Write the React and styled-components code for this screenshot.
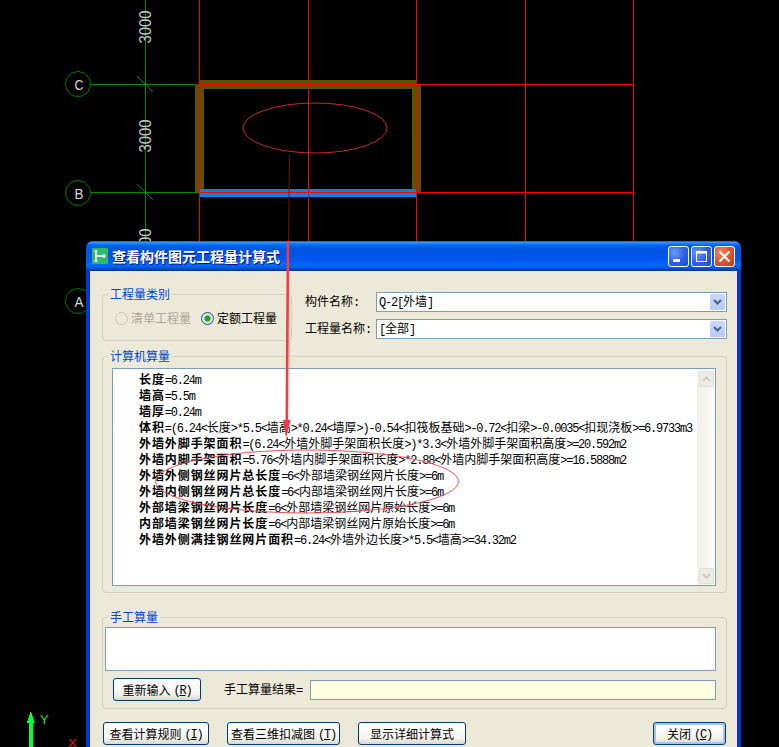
import styled, { createGlobalStyle } from "styled-components";

const GlobalStyle = createGlobalStyle`
  html, body {
    margin: 0;
    background: #000;
  }
  body {
    font-family: "Noto Sans CJK SC", "Liberation Sans", sans-serif;
    font-size: 12px;
    color: #000;
  }
`;

const Screen = styled.div`
  position: relative;
  width: 779px;
  height: 747px;
  overflow: hidden;
  background: #000;
`;

const Overlay = styled.svg`
  position: absolute;
  left: 0;
  top: 0;
  pointer-events: none;
`;

const Dialog = styled.div`
  position: absolute;
  left: 86px;
  top: 241px;
  width: 655px;
  display: flex;
  flex-direction: column;
  background: #0a34d6;
  border-radius: 7px 7px 0 0;
`;

const TitleBar = styled.div`
  height: 30px;
  display: flex;
  align-items: center;
  padding: 0 6px 0 6px;
  border-radius: 7px 7px 0 0;
  background: linear-gradient(
    180deg,
    #0058ee 0%,
    #3593ff 5%,
    #127dff 9%,
    #0262ee 15%,
    #0054e3 28%,
    #0055eb 56%,
    #005bf5 68%,
    #026afe 78%,
    #0062ef 86%,
    #0052d6 92%,
    #0040ab 96%,
    #003092 100%
  );
`;

const TitleText = styled.div`
  margin-left: 4px;
  flex: 1;
  color: #fff;
  font-size: 14px;
  line-height: 18px;
  font-weight: 700;
  white-space: nowrap;
  text-shadow: 1px 1px 0 #0f1089;
`;

const WinButton = styled.div`
  width: 21px;
  height: 21px;
  box-sizing: border-box;
  margin-left: 2px;
  display: flex;
  align-items: center;
  justify-content: center;
  border: 1px solid #fff;
  border-radius: 3px;
  background: ${(p) =>
    p.$close
      ? "radial-gradient(circle at 30% 30%, #ee8a68 0%, #dd5a34 45%, #c13a14 100%)"
      : "radial-gradient(circle at 30% 30%, #6d9bf5 0%, #2f62e6 50%, #1c49d3 100%)"};
`;

const Body = styled.div`
  margin: 0 4px;
  padding: 21px 10px 2px 12px;
  background: #ece9d8;
  display: flex;
  flex-direction: column;
`;

const TopRow = styled.div`
  display: flex;
  align-items: flex-start;
  gap: 13px;
`;

const Group = styled.div`
  position: relative;
  box-sizing: border-box;
  width: ${(p) => p.$w || 625}px;
  height: ${(p) => p.$h}px;
  margin-top: ${(p) => p.$top}px;
  border: 1px solid #d0d0bf;
  border-radius: 4px;
  display: flex;
  flex-direction: column;
`;

const Legend = styled.div`
  position: absolute;
  left: 5px;
  top: -9px;
  padding: 0 2px;
  line-height: 16px;
  color: #0046d5;
  background: #ece9d8;
  white-space: nowrap;
`;

const RadioRow = styled.div`
  display: flex;
  align-items: center;
  height: 45px;
  padding-left: 12px;
  margin-top: 1px;
`;

const RadioOption = styled.label`
  display: flex;
  align-items: center;
  gap: 3px;
  margin-right: 10px;
  line-height: 16px;
  color: ${(p) => (p.$disabled ? "#aca899" : "#000")};
`;

const RadioDot = styled.span`
  width: 13px;
  height: 13px;
  box-sizing: border-box;
  border-radius: 50%;
  border: 1px solid ${(p) => (p.$disabled ? "#cac8bb" : "#1c5180")};
  background: ${(p) =>
    p.$checked
      ? "radial-gradient(circle, #21a121 0 2.5px, #d6dce6 3.5px, #f4f4f0 100%)"
      : "#ece9d8"};
`;

const FormColumn = styled.div`
  display: flex;
  flex-direction: column;
  gap: 7px;
`;

const FormRow = styled.div`
  display: flex;
  align-items: center;
`;

const FormLabel = styled.div`
  width: 71px;
  white-space: nowrap;
  line-height: 16px;
`;

const Combo = styled.div`
  width: 351px;
  height: 20px;
  box-sizing: border-box;
  display: flex;
  align-items: center;
  justify-content: space-between;
  padding: 0 1px 0 2px;
  background: #fff;
  border: 1px solid #7f9db9;
  line-height: 16px;
  white-space: nowrap;
`;

const ComboArrow = styled.div`
  width: 15px;
  height: 16px;
  display: flex;
  align-items: center;
  justify-content: center;
  border-radius: 1px;
  background: linear-gradient(180deg, #c9d9fb 0%, #b7cbf7 100%);
`;

const Output = styled.div`
  box-sizing: border-box;
  margin: 11px 0 0 9px;
  width: 604px;
  height: 218px;
  display: flex;
  background: #fff;
  border: 1px solid #7f9db9;
`;

const Lines = styled.div`
  flex: 1;
  padding: 2px 0 0 26px;
  white-space: nowrap;
  overflow: hidden;
`;

const Line = styled.div`
  height: 16px;
  line-height: 16px;
`;

// the bitmap font's synthetic bold advances about 13px per hanzi
const Key = styled.strong`
  font-weight: 700;
  letter-spacing: 0.92px;
`;

const Latin = styled.span`
  font-family: "Liberation Mono", monospace;
  font-size: 12px;
  letter-spacing: -1.22px;
`;

const ScrollTrack = styled.div`
  width: 18px;
  display: flex;
  flex-direction: column;
  justify-content: space-between;
  align-items: center;
  padding: 2px 0 1px;
  background: linear-gradient(90deg, #f1f0e9 0%, #fbfbf8 100%);
`;

const ScrollButton = styled.div`
  width: 15px;
  height: 16px;
  box-sizing: border-box;
  display: flex;
  align-items: center;
  justify-content: center;
  background: #eeede5;
  border: 1px solid #e2dfd4;
  border-radius: 2px;
`;

const ManualBox = styled.div`
  box-sizing: border-box;
  margin: 9px 0 0 2px;
  width: 611px;
  height: 44px;
  background: #fff;
  border: 1px solid #7f9db9;
`;

const ManualRow = styled.div`
  display: flex;
  align-items: center;
  height: 23px;
  margin-top: 7px;
  padding-left: 10px;
`;

const ResultLabel = styled.div`
  width: 86px;
  margin-left: 23px;
  white-space: nowrap;
  line-height: 16px;
`;

const ResultInput = styled.div`
  box-sizing: border-box;
  width: 406px;
  height: 20px;
  background: #ffffe1;
  border: 1px solid #7f9db9;
`;

const Footer = styled.div`
  display: flex;
  align-items: center;
  gap: 18px;
  margin-top: 13px;
  padding: 0 1px;
`;

const PushButton = styled.div`
  box-sizing: border-box;
  width: ${(p) => p.$w}px;
  height: 23px;
  margin-left: ${(p) => (p.$end ? "auto" : "0")};
  display: flex;
  align-items: center;
  justify-content: center;
  border: 1px solid #003c74;
  border-radius: 3px;
  background: linear-gradient(180deg, #fff 0%, #f5f4ee 70%, #dcd7cb 100%);
  box-shadow: ${(p) => (p.$primary ? "inset 0 0 0 2px #a9c2ee" : "none")};
  line-height: 16px;
  white-space: nowrap;
`;

const Mnemonic = styled.span`
  margin-left: 3px;
`;

const lines = [
  ["长度", "=6.24m"],
  ["墙高", "=5.5m"],
  ["墙厚", "=0.24m"],
  ["体积", "=(6.24<长度>*5.5<墙高>*0.24<墙厚>)-0.54<扣筏板基础>-0.72<扣梁>-0.0035<扣现浇板>=6.9733m3"],
  ["外墙外脚手架面积", "=(6.24<外墙外脚手架面积长度>)*3.3<外墙外脚手架面积高度>=20.592m2"],
  ["外墙内脚手架面积", "=5.76<外墙内脚手架面积长度>*2.88<外墙内脚手架面积高度>=16.5888m2"],
  ["外墙外侧钢丝网片总长度", "=6<外部墙梁钢丝网片长度>=6m"],
  ["外墙内侧钢丝网片总长度", "=6<内部墙梁钢丝网片长度>=6m"],
  ["外部墙梁钢丝网片长度", "=6<外部墙梁钢丝网片原始长度>=6m"],
  ["内部墙梁钢丝网片长度", "=6<内部墙梁钢丝网片原始长度>=6m"],
  ["外墙外侧满挂钢丝网片面积", "=6.24<外墙外边长度>*5.5<墙高>=34.32m2"],
];

// half-width latin next to 12px hanzi, the way the old bitmap font sets it
function Mixed({ text }) {
  return text
    .split(/([\x00-\x7f]+)/)
    .filter(Boolean)
    .map((part, i) =>
      /^[\x00-\x7f]/.test(part) ? <Latin key={i}>{part}</Latin> : <span key={i}>{part}</span>
    );
}

function polygon(cx, cy, r, sides) {
  const pts = [];
  for (let i = 0; i < sides; i++) {
    const a = (i / sides) * Math.PI * 2 - Math.PI / 2;
    pts.push(`${(cx + r * Math.cos(a)).toFixed(1)},${(cy + r * Math.sin(a)).toFixed(1)}`);
  }
  return pts.join(" ");
}

function Bubble({ y, label }) {
  return (
    <>
      <polygon points={polygon(78, y, 12.7, 11)} fill="none" stroke="#007a00" />
      <text x="79" y={y + 5.5} fill="#d8d8d8" fontFamily="Liberation Sans" fontSize="15" textAnchor="middle" textLength="9" lengthAdjust="spacingAndGlyphs">
        {label}
      </text>
    </>
  );
}

function Dimension({ y }) {
  return (
    <text
      transform={`translate(151 ${y}) rotate(-90)`}
      fill="#c8c8c8"
      fontFamily="Liberation Sans"
      fontSize="16"
      textAnchor="middle"
      textLength="33"
      lengthAdjust="spacingAndGlyphs"
    >
      3000
    </text>
  );
}

function CadDrawing() {
  const verticals = [199, 308, 416, 525, 633];
  return (
    <Overlay width="779" height="747">
      <g stroke="#008a00">
        <path d="M145.5 0V241M91 84.5H199M91 192.5H199" shapeRendering="crispEdges" />
        <path d="M137 76L153 92M137 184L153 200" />
      </g>
      <Dimension y={27} />
      <Dimension y={136} />
      <Dimension y={245} />
      <Bubble y={84} label="C" />
      <Bubble y={193} label="B" />
      <Bubble y={301} label="A" />
      <g shapeRendering="crispEdges">
        <path fill="#5a5200" d="M199 80H416V84H421V192H412V89H204V192H195V84H199Z" />
        <rect x="199" y="189" width="217" height="8" fill="#0a80f0" />
        <g stroke="#f00">
          {verticals.map((x) => (
            <path key={x} d={`M${x + 0.5} 0V241`} />
          ))}
          <path d="M199 84.5H634M199 192.5H634" />
        </g>
      </g>
      <ellipse cx="315" cy="128" rx="72" ry="25" fill="none" stroke="#c8282e" />
      <path d="M289.4 156L289 200L288.5 241" fill="none" stroke="#6e1518" />
      <path d="M31 711L35 723H33V747H29V723H27Z" fill="#00ff33" shapeRendering="crispEdges" />
      <text x="40" y="724" fill="#22e03a" fontFamily="Liberation Sans" fontSize="13">
        Y
      </text>
      <text x="68" y="746.5" fill="#f01818" fontFamily="Liberation Sans" fontSize="11" textLength="9" lengthAdjust="spacingAndGlyphs">
        X
      </text>
    </Overlay>
  );
}

function Annotations() {
  return (
    <Overlay width="779" height="747">
      <path d="M288 241L286.8 422" fill="none" stroke="#fa3a40" strokeWidth="2.6" />
      <path d="M283 420L290.5 420L286 438Z" fill="#fa3a40" />
      <ellipse cx="307" cy="481.5" rx="151.5" ry="31.5" fill="none" stroke="#f0505a" />
    </Overlay>
  );
}

function AppIcon() {
  return (
    <svg width="16" height="16" viewBox="0 0 16 16">
      <rect width="16" height="16" rx="1" fill="#2dbb6a" />
      <path d="M4 3V13M4 8H11M2.5 3H5.5M2.5 13H5.5" stroke="#fff" strokeWidth="1.6" fill="none" />
      <rect x="10.5" y="6.5" width="3" height="3" fill="#fff" />
    </svg>
  );
}

function Chevron({ up, color, w = 9 }) {
  return (
    <svg width={w} height="6" viewBox="0 0 9 6">
      <path d={up ? "M1 5L4.5 1.5L8 5" : "M1 1L4.5 4.5L8 1"} fill="none" stroke={color} strokeWidth="2" />
    </svg>
  );
}

export default function App() {
  return (
    <Screen>
      <GlobalStyle />
      <CadDrawing />
      <Dialog>
        <TitleBar>
          <AppIcon />
          <TitleText>查看构件图元工程量计算式</TitleText>
          <WinButton>
            <svg width="19" height="19" viewBox="0 0 19 19">
              <rect x="4" y="12" width="7" height="3" fill="#fff" />
            </svg>
          </WinButton>
          <WinButton>
            <svg width="19" height="19" viewBox="0 0 19 19">
              <path d="M4.5 5.5H14.5V14.5H4.5Z" fill="none" stroke="#fff" />
              <rect x="4" y="4" width="11" height="2.5" fill="#fff" />
            </svg>
          </WinButton>
          <WinButton $close>
            <svg width="19" height="19" viewBox="0 0 19 19">
              <path d="M4.5 4.5L14.5 14.5M14.5 4.5L4.5 14.5" stroke="#fff" strokeWidth="2" />
            </svg>
          </WinButton>
        </TitleBar>
        <Body>
          <TopRow>
            <Group $w={190} $h={47} $top={2}>
              <Legend>工程量类别</Legend>
              <RadioRow>
                <RadioOption $disabled>
                  <RadioDot $disabled />
                  清单工程量
                </RadioOption>
                <RadioOption>
                  <RadioDot $checked />
                  定额工程量
                </RadioOption>
              </RadioRow>
            </Group>
            <FormColumn>
              <FormRow>
                <FormLabel>
                  <Mixed text="构件名称:" />
                </FormLabel>
                <Combo>
                  <span>
                    <Mixed text="Q-2[外墙]" />
                  </span>
                  <ComboArrow>
                    <Chevron color="#4d6185" />
                  </ComboArrow>
                </Combo>
              </FormRow>
              <FormRow>
                <FormLabel>
                  <Mixed text="工程量名称:" />
                </FormLabel>
                <Combo>
                  <span>
                    <Mixed text="[全部]" />
                  </span>
                  <ComboArrow>
                    <Chevron color="#4d6185" />
                  </ComboArrow>
                </Combo>
              </FormRow>
            </FormColumn>
          </TopRow>

          <Group $h={237} $top={15}>
            <Legend>计算机算量</Legend>
            <Output>
              <Lines>
                {lines.map(([key, rest]) => (
                  <Line key={key}>
                    <Key>{key}</Key>
                    <Mixed text={rest} />
                  </Line>
                ))}
              </Lines>
              <ScrollTrack>
                <ScrollButton>
                  <Chevron up color="#cfcdc0" />
                </ScrollButton>
                <ScrollButton>
                  <Chevron color="#cfcdc0" />
                </ScrollButton>
              </ScrollTrack>
            </Output>
          </Group>

          <Group $h={92} $top={24}>
            <Legend>手工算量</Legend>
            <ManualBox />
            <ManualRow>
              <PushButton $w={88}>
                重新输入
                <Mnemonic>
                  <Latin>
                    (<u>R</u>)
                  </Latin>
                </Mnemonic>
              </PushButton>
              <ResultLabel>
                <Mixed text="手工算量结果=" />
              </ResultLabel>
              <ResultInput />
            </ManualRow>
          </Group>

          <Footer>
            <PushButton $w={106}>
              查看计算规则
              <Mnemonic>
                <Latin>
                  (<u>I</u>)
                </Latin>
              </Mnemonic>
            </PushButton>
            <PushButton $w={113}>
              查看三维扣减图
              <Mnemonic>
                <Latin>
                  (<u>T</u>)
                </Latin>
              </Mnemonic>
            </PushButton>
            <PushButton $w={108}>显示详细计算式</PushButton>
            <PushButton $w={73} $end $primary>
              关闭
              <Mnemonic>
                <Latin>
                  (<u>C</u>)
                </Latin>
              </Mnemonic>
            </PushButton>
          </Footer>
        </Body>
      </Dialog>
      <Annotations />
    </Screen>
  );
}
